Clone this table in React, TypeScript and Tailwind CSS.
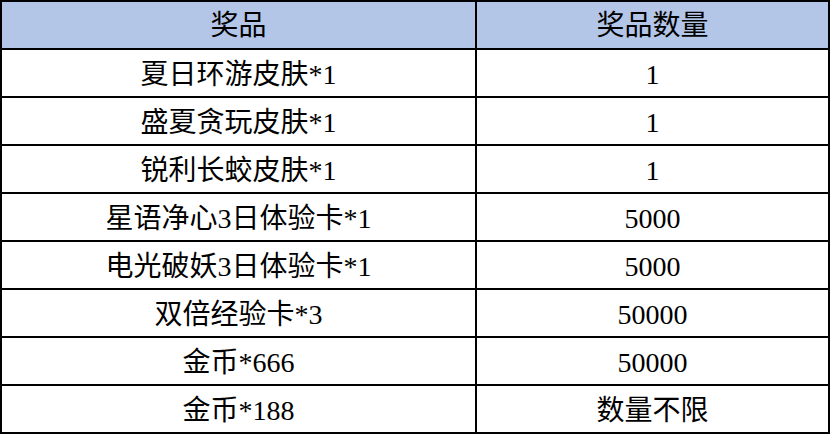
import React from "react";

const rows: [string, string][] = [
  ["夏日环游皮肤*1", "1"],
  ["盛夏贪玩皮肤*1", "1"],
  ["锐利长蛟皮肤*1", "1"],
  ["星语净心3日体验卡*1", "5000"],
  ["电光破妖3日体验卡*1", "5000"],
  ["双倍经验卡*3", "50000"],
  ["金币*666", "50000"],
  ["金币*188", "数量不限"],
];

export default function App() {
  return (
    <div className="w-[830px] h-[434px] bg-white overflow-hidden">
      <table
        className="border-collapse w-[830px] text-black text-[28px] leading-none"
        style={{ fontFamily: '"Liberation Serif", "Noto Sans CJK SC", serif' }}
      >
        <colgroup>
          <col className="w-[476px]" />
          <col className="w-[354px]" />
        </colgroup>
        <thead>
          <tr className="h-[48px] bg-[#b4c6e7]">
            <th className="border-2 border-black font-normal text-center align-middle pt-[2px]">奖品</th>
            <th className="border-2 border-black font-normal text-center align-middle pt-[2px]">奖品数量</th>
          </tr>
        </thead>
        <tbody>
          {rows.map(([a, b]) => (
            <tr key={a} className="h-[48px]">
              <td className="border-2 border-black text-center align-middle pt-[4px]">{a}</td>
              <td className="border-2 border-black text-center align-middle pt-[4px]">{b}</td>
            </tr>
          ))}
        </tbody>
      </table>
    </div>
  );
}
